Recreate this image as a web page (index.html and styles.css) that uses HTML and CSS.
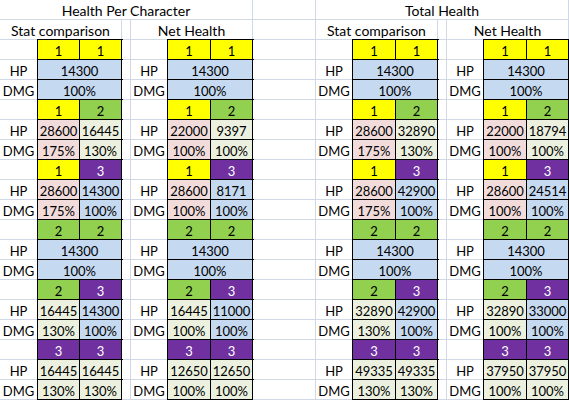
FILE: index.html
```html
<!DOCTYPE html>
<html>
<head>
<meta charset="utf-8">
<title>Health comparison</title>
<link rel="stylesheet" href="styles.css">
</head>
<body>
<div class="sheet">
  <!-- row 1 -->
  <div class="c s7 t">Health Per Character</div><div class="c"></div><div class="c s7 t">Total Health</div>
  <!-- row 2 -->
  <div class="c s3 t">Stat comparison</div><div class="c"></div><div class="c s3 t">Net Health</div><div class="c"></div><div class="c s3 t">Stat comparison</div><div class="c"></div><div class="c s3 t">Net Health</div>

  <!-- block 1,1 -->
  <div class="c"></div><div class="c d y">1</div><div class="c d y">1</div><div class="c"></div><div class="c"></div><div class="c d y">1</div><div class="c d y">1</div><div class="c"></div><div class="c"></div><div class="c d y">1</div><div class="c d y">1</div><div class="c"></div><div class="c"></div><div class="c d y">1</div><div class="c d y">1</div>
  <div class="c">HP</div><div class="c d s2 bl">14300</div><div class="c"></div><div class="c">HP</div><div class="c d s2 bl">14300</div><div class="c"></div><div class="c">HP</div><div class="c d s2 bl">14300</div><div class="c"></div><div class="c">HP</div><div class="c d s2 bl">14300</div>
  <div class="c">DMG</div><div class="c d s2 bl">100%</div><div class="c"></div><div class="c">DMG</div><div class="c d s2 bl">100%</div><div class="c"></div><div class="c">DMG</div><div class="c d s2 bl">100%</div><div class="c"></div><div class="c">DMG</div><div class="c d s2 bl">100%</div>

  <!-- block 1,2 -->
  <div class="c"></div><div class="c d y">1</div><div class="c d g">2</div><div class="c"></div><div class="c"></div><div class="c d y">1</div><div class="c d g">2</div><div class="c"></div><div class="c"></div><div class="c d y">1</div><div class="c d g">2</div><div class="c"></div><div class="c"></div><div class="c d y">1</div><div class="c d g">2</div>
  <div class="c">HP</div><div class="c d pk">28600</div><div class="c d gt">16445</div><div class="c"></div><div class="c">HP</div><div class="c d pk">22000</div><div class="c d gt">9397</div><div class="c"></div><div class="c">HP</div><div class="c d pk">28600</div><div class="c d gt">32890</div><div class="c"></div><div class="c">HP</div><div class="c d pk">22000</div><div class="c d gt">18794</div>
  <div class="c">DMG</div><div class="c d pk">175%</div><div class="c d gt">130%</div><div class="c"></div><div class="c">DMG</div><div class="c d pk">100%</div><div class="c d gt">100%</div><div class="c"></div><div class="c">DMG</div><div class="c d pk">175%</div><div class="c d gt">130%</div><div class="c"></div><div class="c">DMG</div><div class="c d pk">100%</div><div class="c d gt">100%</div>

  <!-- block 1,3 -->
  <div class="c"></div><div class="c d y">1</div><div class="c d p">3</div><div class="c"></div><div class="c"></div><div class="c d y">1</div><div class="c d p">3</div><div class="c"></div><div class="c"></div><div class="c d y">1</div><div class="c d p">3</div><div class="c"></div><div class="c"></div><div class="c d y">1</div><div class="c d p">3</div>
  <div class="c">HP</div><div class="c d pk">28600</div><div class="c d bl">14300</div><div class="c"></div><div class="c">HP</div><div class="c d pk">28600</div><div class="c d bl">8171</div><div class="c"></div><div class="c">HP</div><div class="c d pk">28600</div><div class="c d bl">42900</div><div class="c"></div><div class="c">HP</div><div class="c d pk">28600</div><div class="c d bl">24514</div>
  <div class="c">DMG</div><div class="c d pk">175%</div><div class="c d bl">100%</div><div class="c"></div><div class="c">DMG</div><div class="c d pk">100%</div><div class="c d bl">100%</div><div class="c"></div><div class="c">DMG</div><div class="c d pk">175%</div><div class="c d bl">100%</div><div class="c"></div><div class="c">DMG</div><div class="c d pk">100%</div><div class="c d bl">100%</div>

  <!-- block 2,2 -->
  <div class="c"></div><div class="c d g">2</div><div class="c d g">2</div><div class="c"></div><div class="c"></div><div class="c d g">2</div><div class="c d g">2</div><div class="c"></div><div class="c"></div><div class="c d g">2</div><div class="c d g">2</div><div class="c"></div><div class="c"></div><div class="c d g">2</div><div class="c d g">2</div>
  <div class="c">HP</div><div class="c d s2 bl">14300</div><div class="c"></div><div class="c">HP</div><div class="c d s2 bl">14300</div><div class="c"></div><div class="c">HP</div><div class="c d s2 bl">14300</div><div class="c"></div><div class="c">HP</div><div class="c d s2 bl">14300</div>
  <div class="c">DMG</div><div class="c d s2 bl">100%</div><div class="c"></div><div class="c">DMG</div><div class="c d s2 bl">100%</div><div class="c"></div><div class="c">DMG</div><div class="c d s2 bl">100%</div><div class="c"></div><div class="c">DMG</div><div class="c d s2 bl">100%</div>

  <!-- block 2,3 -->
  <div class="c"></div><div class="c d g">2</div><div class="c d p">3</div><div class="c"></div><div class="c"></div><div class="c d g">2</div><div class="c d p">3</div><div class="c"></div><div class="c"></div><div class="c d g">2</div><div class="c d p">3</div><div class="c"></div><div class="c"></div><div class="c d g">2</div><div class="c d p">3</div>
  <div class="c">HP</div><div class="c d gt">16445</div><div class="c d bl">14300</div><div class="c"></div><div class="c">HP</div><div class="c d gt">16445</div><div class="c d bl">11000</div><div class="c"></div><div class="c">HP</div><div class="c d gt">32890</div><div class="c d bl">42900</div><div class="c"></div><div class="c">HP</div><div class="c d gt">32890</div><div class="c d bl">33000</div>
  <div class="c">DMG</div><div class="c d gt">130%</div><div class="c d bl">100%</div><div class="c"></div><div class="c">DMG</div><div class="c d gt">100%</div><div class="c d bl">100%</div><div class="c"></div><div class="c">DMG</div><div class="c d gt">130%</div><div class="c d bl">100%</div><div class="c"></div><div class="c">DMG</div><div class="c d gt">100%</div><div class="c d bl">100%</div>

  <!-- block 3,3 -->
  <div class="c"></div><div class="c d p">3</div><div class="c d p">3</div><div class="c"></div><div class="c"></div><div class="c d p">3</div><div class="c d p">3</div><div class="c"></div><div class="c"></div><div class="c d p">3</div><div class="c d p">3</div><div class="c"></div><div class="c"></div><div class="c d p">3</div><div class="c d p">3</div>
  <div class="c">HP</div><div class="c d gt">16445</div><div class="c d gt">16445</div><div class="c"></div><div class="c">HP</div><div class="c d gt">12650</div><div class="c d gt">12650</div><div class="c"></div><div class="c">HP</div><div class="c d gt">49335</div><div class="c d gt">49335</div><div class="c"></div><div class="c">HP</div><div class="c d gt">37950</div><div class="c d gt">37950</div>
  <div class="c">DMG</div><div class="c d gt">130%</div><div class="c d gt">130%</div><div class="c"></div><div class="c">DMG</div><div class="c d gt">100%</div><div class="c d gt">100%</div><div class="c"></div><div class="c">DMG</div><div class="c d gt">130%</div><div class="c d gt">130%</div><div class="c"></div><div class="c">DMG</div><div class="c d gt">100%</div><div class="c d gt">100%</div>
</div>
</body>
</html>
```

FILE: styles.css
```css
html, body {
  margin: 0;
  padding: 0;
  background: #ffffff;
}

.sheet {
  display: grid;
  grid-template-columns: 38px 42px 42px 9px 37px 43px 42px 63px 37px 43px 42px 9px 37px 43px 42px;
  grid-auto-rows: 20px;
  width: 569px;
  font-family: Lato, "Liberation Sans", sans-serif;
  font-size: 13px;
  color: #000000;
}

.c {
  box-sizing: border-box;
  height: 20px;
  padding-top: 3px;
  line-height: 16px;
  text-align: center;
  white-space: nowrap;
  overflow: visible;
  background: #ffffff;
  border-right: 1px solid #d0d7e5;
  border-bottom: 1px solid #d0d7e5;
}

.t {
  font-size: 14px;
}

.s2 { grid-column: span 2; }
.s3 { grid-column: span 3; }
.s7 { grid-column: span 7; }

.d {
  border-right-color: #000000;
  border-bottom-color: #000000;
  box-shadow: 0 0 0 1px #000000;
}

.y { background: #ffff00; }
.g { background: #92d050; }
.p { background: #7030a0; color: #ffffff; }
.pk { background: #f2dcdb; }
.gt { background: #ebf1de; }
.bl { background: #c5d9f1; }
```
